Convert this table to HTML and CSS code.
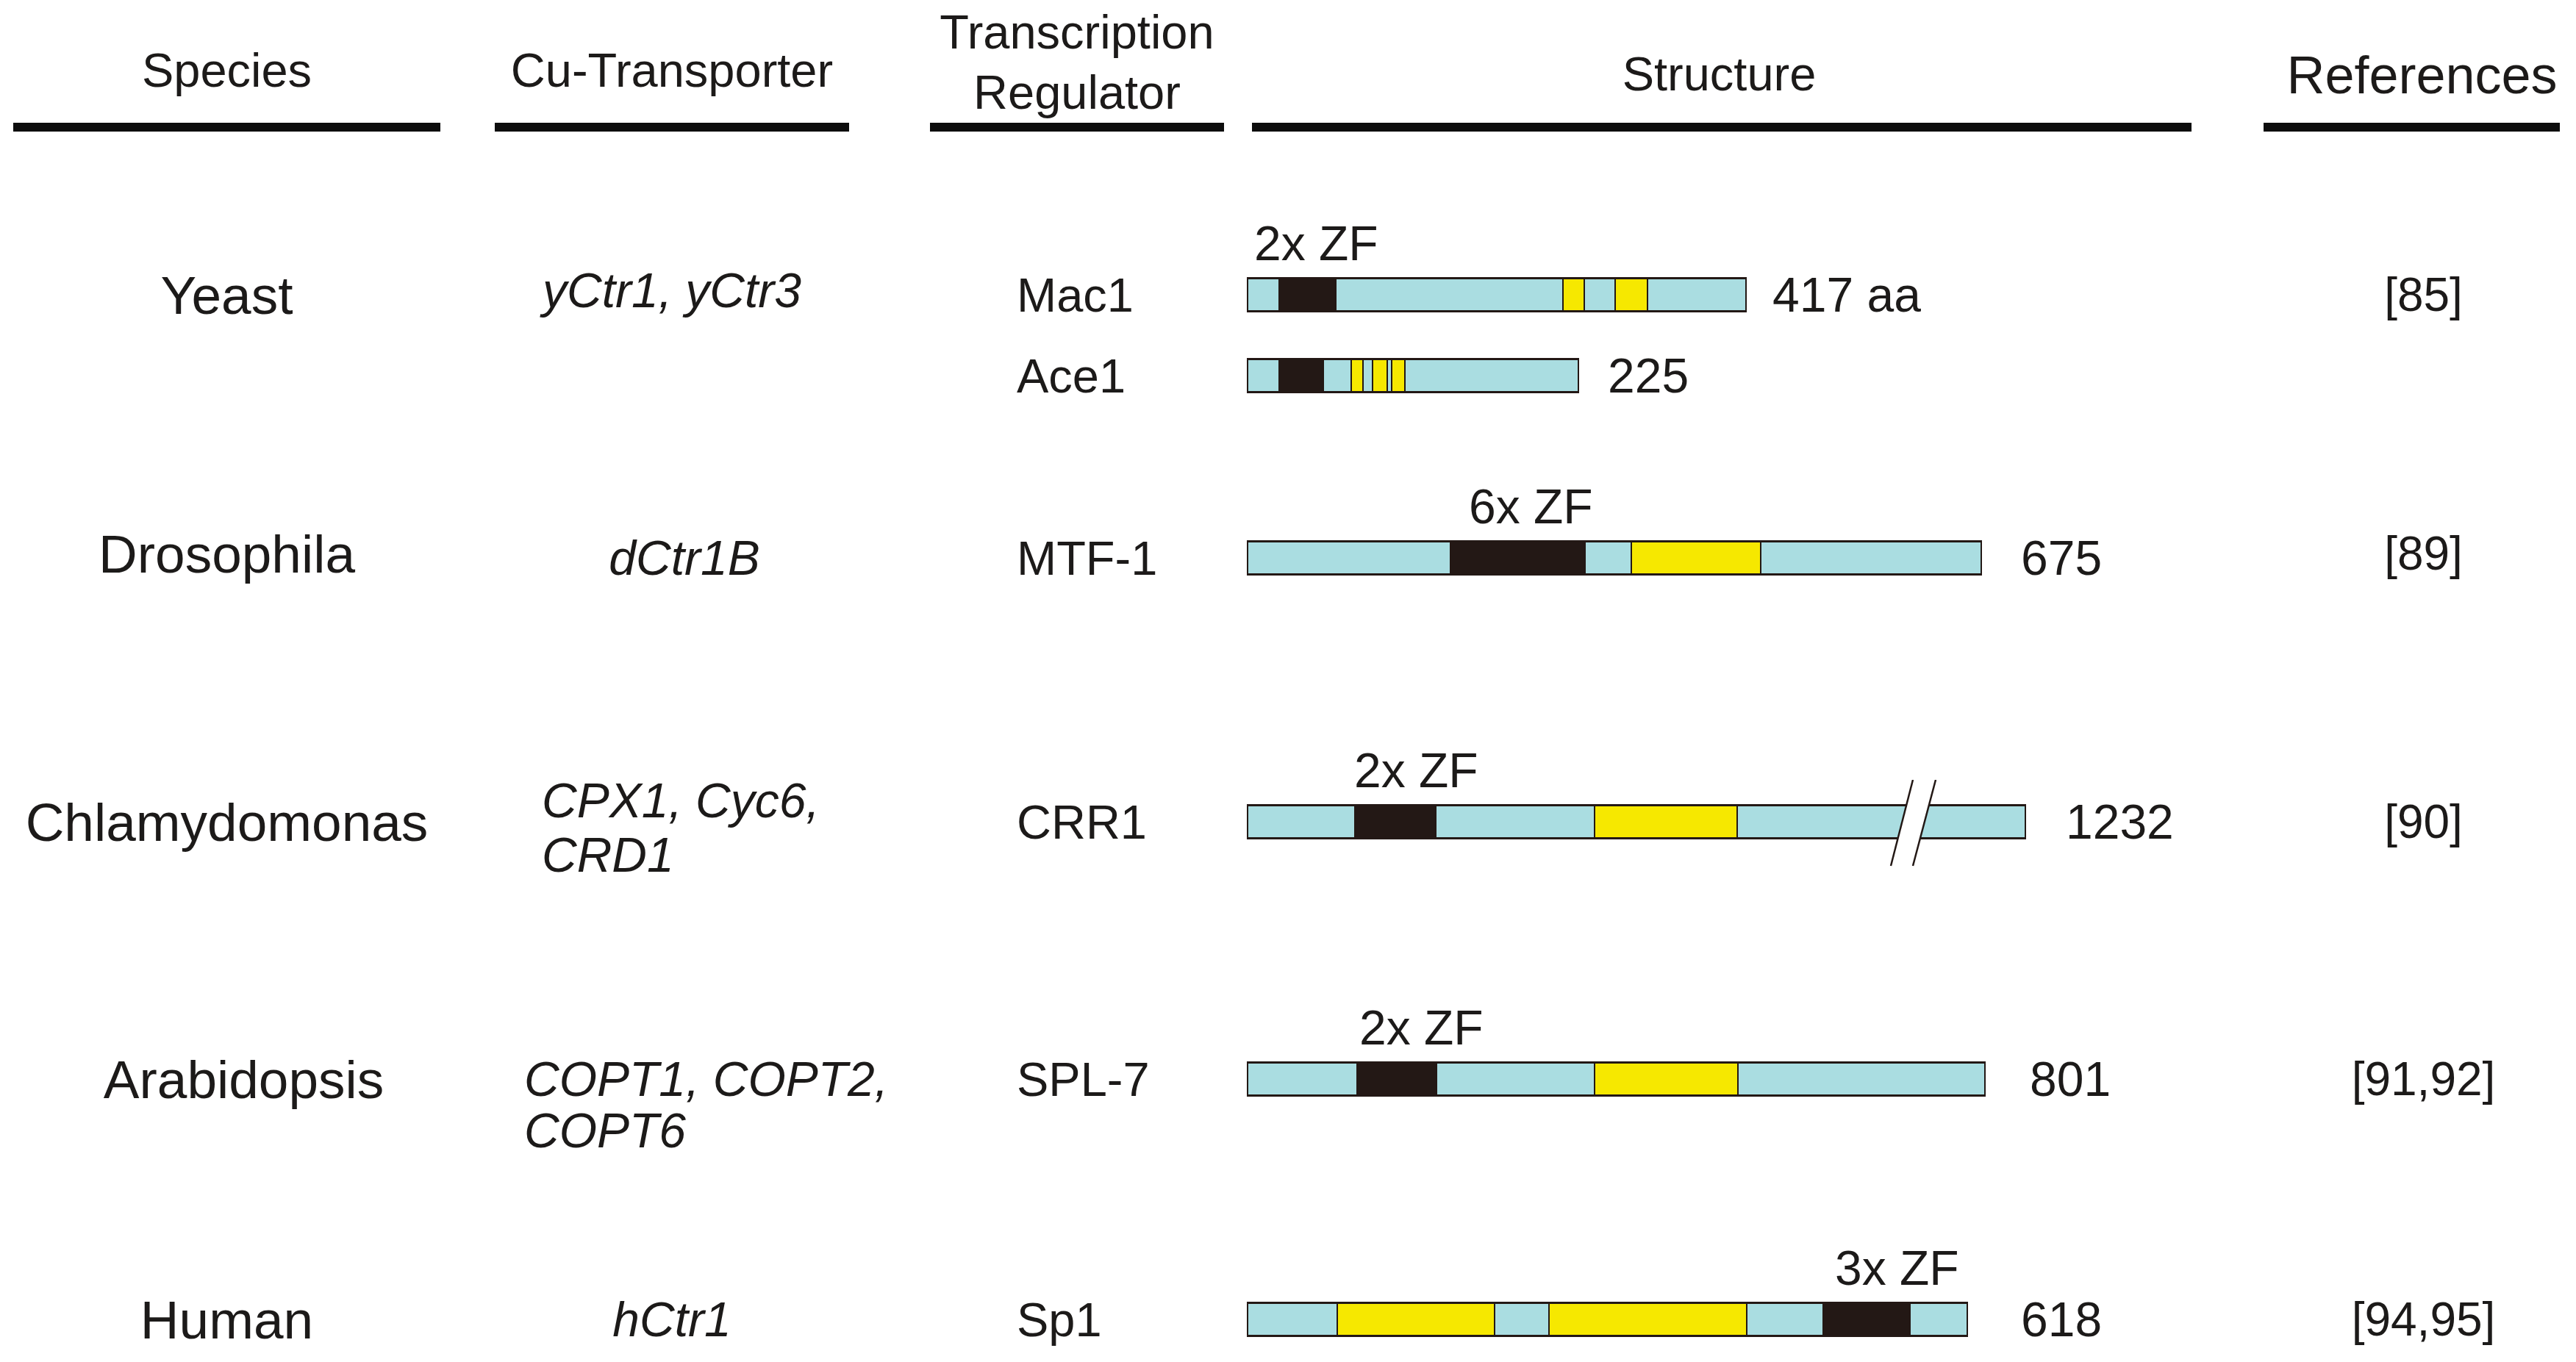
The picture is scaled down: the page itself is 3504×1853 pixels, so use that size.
FILE: index.html
```html
<!DOCTYPE html>
<html>
<head>
<meta charset="utf-8">
<link rel="stylesheet" href="styles.css">
</head>
<body>
<div class="fig">
  <div class="grid head">
    <div class="col-sp hcell"><div class="htext h-std">Species</div><div class="rule"></div></div>
    <div class="col-cu hcell"><div class="htext h-std">Cu-Transporter</div><div class="rule"></div></div>
    <div class="col-tr hcell"><div class="htext h-tr">Transcription<br>Regulator</div><div class="rule"></div></div>
    <div class="col-st hcell"><div class="htext h-st">Structure</div><div class="rule rule-st"></div></div>
    <div class="col-ref hcell"><div class="htext h-ref">References</div><div class="rule"></div></div>
  </div>

  <div class="grid row r-yeast">
    <div class="col-sp cell sp">Yeast</div>
    <div class="col-cu cell cu"><i class="up">yCtr1, yCtr3</i></div>
    <div class="col-tr">
      <div class="cell tr">Mac1</div>
      <div class="cell tr">Ace1</div>
    </div>
    <div class="col-st">
      <div class="cell st">
        <div class="bar" style="width:680px">
          <span class="seg c" style="width:41px"></span>
          <span class="seg k" style="width:79px"></span>
          <span class="seg c" style="width:307px"></span>
          <span class="seg y" style="width:31px"></span>
          <span class="seg c" style="width:40px"></span>
          <span class="seg y" style="width:46px"></span>
          <span class="seg c fill"></span>
          <span class="zf" style="left:8px">2x ZF</span>
        </div>
        <span class="len" style="margin-left:35px">417 aa</span>
      </div>
      <div class="cell st">
        <div class="bar" style="width:452px">
          <span class="seg c" style="width:41px"></span>
          <span class="seg k" style="width:62px"></span>
          <span class="seg c" style="width:36px"></span>
          <span class="seg y" style="width:18px"></span>
          <span class="seg c" style="width:11px"></span>
          <span class="seg y" style="width:22px"></span>
          <span class="seg c" style="width:4px"></span>
          <span class="seg y" style="width:20px"></span>
          <span class="seg c fill"></span>
        </div>
        <span class="len" style="margin-left:39px">225</span>
      </div>
    </div>
    <div class="col-ref cell ref">[85]</div>
  </div>

  <div class="grid row r-dro">
    <div class="col-sp cell sp"><span class="up">Drosophila</span></div>
    <div class="col-cu cell cu cu-dro"><i>dCtr1B</i></div>
    <div class="col-tr cell tr">MTF-1</div>
    <div class="col-st cell st">
      <div class="bar" style="width:1000px">
        <span class="seg c" style="width:274px"></span>
        <span class="seg k" style="width:185px"></span>
        <span class="seg c" style="width:61px"></span>
        <span class="seg y" style="width:178px"></span>
        <span class="seg c fill"></span>
        <span class="zf" style="left:300px">6x ZF</span>
      </div>
      <span class="len" style="margin-left:53px">675</span>
    </div>
    <div class="col-ref cell ref"><span class="up">[89]</span></div>
  </div>

  <div class="grid row r-chl">
    <div class="col-sp cell sp">Chlamydomonas</div>
    <div class="col-cu cell cu-multi"><i class="multi m-chl">CPX1, Cyc6,<br>CRD1</i></div>
    <div class="col-tr cell tr">CRR1</div>
    <div class="col-st cell st">
      <div class="bar" style="width:1060px">
        <span class="seg c" style="width:144px"></span>
        <span class="seg k" style="width:112px"></span>
        <span class="seg c" style="width:214px"></span>
        <span class="seg y" style="width:196px"></span>
        <span class="seg c fill"></span>
        <span class="zf" style="left:144px">2x ZF</span>
        <svg class="brk" width="85" height="120" viewBox="0 0 85 120">
          <polygon points="42,0 73,0 42,117 12,117" fill="#ffffff"/>
          <line x1="42" y1="0" x2="12" y2="117" stroke="#231815" stroke-width="2.5"/>
          <line x1="73" y1="0" x2="42" y2="117" stroke="#231815" stroke-width="2.5"/>
        </svg>
      </div>
      <span class="len" style="margin-left:54px">1232</span>
    </div>
    <div class="col-ref cell ref">[90]</div>
  </div>

  <div class="grid row r-ara">
    <div class="col-sp cell sp sp-ara">Arabidopsis</div>
    <div class="col-cu cell cu-multi"><i class="multi m-ara">COPT1, COPT2,<br>COPT6</i></div>
    <div class="col-tr cell tr">SPL-7</div>
    <div class="col-st cell st">
      <div class="bar" style="width:1005px">
        <span class="seg c" style="width:147px"></span>
        <span class="seg k" style="width:110px"></span>
        <span class="seg c" style="width:213px"></span>
        <span class="seg y" style="width:197px"></span>
        <span class="seg c fill"></span>
        <span class="zf" style="left:151px">2x ZF</span>
      </div>
      <span class="len" style="margin-left:60px">801</span>
    </div>
    <div class="col-ref cell ref">[91,92]</div>
  </div>

  <div class="grid row r-hum">
    <div class="col-sp cell sp">Human</div>
    <div class="col-cu cell cu"><i>hCtr1</i></div>
    <div class="col-tr cell tr">Sp1</div>
    <div class="col-st cell st">
      <div class="bar" style="width:981px">
        <span class="seg c" style="width:120px"></span>
        <span class="seg y" style="width:216px"></span>
        <span class="seg c" style="width:72px"></span>
        <span class="seg y" style="width:271px"></span>
        <span class="seg c" style="width:102px"></span>
        <span class="seg k" style="width:120px"></span>
        <span class="seg c fill"></span>
        <span class="zf" style="left:798px">3x ZF</span>
      </div>
      <span class="len" style="margin-left:72px">618</span>
    </div>
    <div class="col-ref cell ref">[94,95]</div>
  </div>
</div>
</body>
</html>
```

FILE: styles.css
```css
html, body {
  margin: 0;
  padding: 0;
  background: #ffffff;
}

body {
  font-family: "Liberation Sans", Arial, sans-serif;
  color: #1c1a19;
}

.fig {
  width: 3504px;
  height: 1853px;
  padding-left: 18px;
  box-sizing: border-box;
  display: flex;
  flex-direction: column;
  overflow: hidden;
}

.grid {
  display: grid;
  grid-template-columns: [sp] 581px 74px [cu] 482px 110px [tr] 400px 31px [st] 1285px 98px [ref] 403px;
  align-items: start;
}

.grid > * { grid-row: 1; }

.col-sp { grid-column: sp / span 1; }
.col-cu { grid-column: cu / span 1; }
.col-tr { grid-column: tr / span 1; }
.col-st { grid-column: st / span 1; }
.col-ref { grid-column: ref / span 1; }

/* header */
.head {
  height: 179px;
  align-items: end;
}

.hcell {
  display: flex;
  flex-direction: column;
}

.htext {
  text-align: center;
  font-size: 65px;
  line-height: 65px;
  white-space: nowrap;
}

.h-std { margin-bottom: 39px; }

.h-tr {
  line-height: 82px;
  margin-bottom: 0;
}

.h-st { margin-bottom: 34px; }

.h-ref {
  font-size: 72px;
  line-height: 72px;
  margin-bottom: 29px;
  padding-left: 28px;
}

.rule {
  height: 12px;
  background: #0d0d0d;
}

.rule-st { margin-left: 7px; }

/* rows */
.cell {
  height: 110px;
  display: flex;
  align-items: center;
  white-space: nowrap;
}

.up {
  display: block;
  margin-bottom: 12px;
}

.r-yeast { margin-top: 167px; }
.r-dro { margin-top: 138px; }
.r-chl { margin-top: 249px; }
.r-ara { margin-top: 240px; }
.r-hum { margin-top: 217px; }

.sp {
  justify-content: center;
  font-size: 73px;
}

.sp-ara { padding-left: 46px; }

.cu {
  justify-content: center;
  font-size: 66px;
}

.cu-dro { padding-left: 34px; }

.cu-multi {
  font-size: 66px;
}

.multi {
  display: block;
}

.m-chl {
  line-height: 74px;
  padding-left: 64px;
  margin-top: 16px;
}

.m-ara {
  line-height: 70px;
  padding-left: 40px;
  margin-top: 70px;
}

.tr {
  padding-left: 118px;
  font-size: 65px;
}

.ref {
  justify-content: center;
  padding-left: 32px;
  font-size: 64px;
}

/* structure bars */
.st {
  font-size: 66px;
}

.bar {
  position: relative;
  height: 48px;
  box-sizing: border-box;
  border-style: solid;
  border-color: #231815;
  border-width: 3px 2px;
  display: flex;
  flex: none;
}

.seg {
  display: block;
  height: 100%;
  flex: none;
  box-sizing: border-box;
}

.seg.fill { flex: 1 1 auto; }

.c { background: #aadde1; }
.k { background: #231815; }
.y {
  background: #f6e800;
  border-left: 2px solid #231815;
  border-right: 2px solid #231815;
}

.zf {
  position: absolute;
  bottom: calc(100% + 16px);
  font-size: 66px;
  line-height: 66px;
  white-space: nowrap;
}

.brk {
  position: absolute;
  left: 862px;
  top: -36px;
}

.len {
  font-size: 66px;
  line-height: 66px;
}
```
